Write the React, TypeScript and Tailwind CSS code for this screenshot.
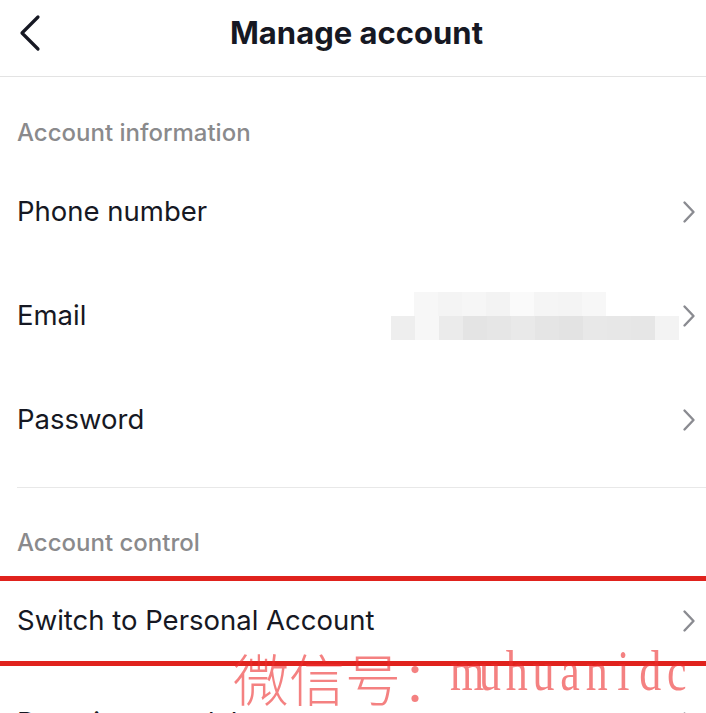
import React from "react";

const font = { fontFamily: "Inter, 'Open Sans', sans-serif" };

function Chevron({ className = "" }: { className?: string }) {
  return (
    <svg width="14" height="24" viewBox="0 0 14 24" className={className} fill="none">
      <path d="M2.5 2.5 L11.5 12 L2.5 21.5" stroke="#8a8b91" strokeWidth="2.4" strokeLinecap="round" strokeLinejoin="round" />
    </svg>
  );
}

function Row({ label, children, className = "" }: { label: string; children?: React.ReactNode; className?: string }) {
  return (
    <div className={`flex h-[104px] items-center justify-between pl-[17px] pr-[10px] ${className}`}>
      <span className="text-[27.5px] text-[#161823]">{label}</span>
      <div className="flex items-center">
        {children}
        <Chevron />
      </div>
    </div>
  );
}

function SectionLabel({ label, h, pt }: { label: string; h: string; pt: string }) {
  return (
    <div className={`${h} ${pt} pl-[17px]`}>
      <span className="text-[24px] font-medium leading-[28px] text-[#8a8a8c]">{label}</span>
    </div>
  );
}

// pixelated blur over the email address
const blurTop = ["#f7f7f7", "#f4f4f4", "#f6f6f6", "#f3f3f3", "#fafafa", "#f5f5f5", "#f4f4f4", "#f7f7f7"];
const blurBottom = ["#eeeeee", "#f7f7f7", "#ebebeb", "#e4e4e4", "#e6e6e6", "#e9e9e9", "#e5e5e5", "#e3e3e3", "#e8e8e8", "#e7e7e7", "#e6e6e6", "#f3f3f3"];

function EmailBlur() {
  return (
    <div className="mr-[3px] flex flex-col">
      <div className="ml-[23px] flex h-[24px]">
        {blurTop.map((c, i) => (
          <div key={i} className="h-full w-[24px]" style={{ backgroundColor: c }} />
        ))}
      </div>
      <div className="flex h-[24px]">
        {blurBottom.map((c, i) => (
          <div key={i} className="h-full w-[24px]" style={{ backgroundColor: c }} />
        ))}
      </div>
    </div>
  );
}

export default function App() {
  return (
    <div className="relative h-[713px] w-[706px] overflow-hidden bg-white" style={font}>
      {/* Header */}
      <div className="relative flex h-[77px] items-center justify-center border-b border-[#e3e3e3]">
        <svg width="24" height="38" viewBox="0 0 24 38" className="absolute left-[18px] top-[14px]" fill="none">
          <path d="M20 3 L4 19 L20 35" stroke="#161823" strokeWidth="3.2" strokeLinecap="round" strokeLinejoin="round" />
        </svg>
        <h1 className="mb-[10px] ml-[7px] text-[31px] font-bold text-[#161823]">Manage account</h1>
      </div>

      <SectionLabel label="Account information" h="h-[83px]" pt="pt-[42px]" />
      <Row label="Phone number" />
      <Row label="Email">
        <EmailBlur />
      </Row>
      <Row label="Password" />

      <div className="ml-[17px] mt-[15px] h-px bg-[#e8e8e8]" />

      <SectionLabel label="Account control" h="h-[88px]" pt="pt-[41px]" />
      <div className="border-y-[5px] border-[#e0221d]">
        <div className="flex h-[80px] items-center justify-between pl-[17px] pr-[10px]">
          <span className="text-[27.5px] text-[#161823]">Switch to Personal Account</span>
          <Chevron />
        </div>
      </div>
      <Row label="Deactivate or delete account" className="pt-[10px]" />

      {/* watermark */}
      <div className="pointer-events-none absolute left-[233px] top-[645px] flex items-end whitespace-nowrap text-[rgba(236,45,45,0.6)]">
        <span className="text-[56px] leading-[64px]" style={{ fontFamily: "'Noto Sans CJK SC', sans-serif", fontWeight: 300 }}>
          微信号：
        </span>
        <span className="mb-[1px] -ml-[7px] flex h-[56px] origin-bottom scale-y-[1.3]" style={{ fontFamily: "'Liberation Serif', serif" }}>
          {"muhuanidc".split("").map((ch, i) => (
            <span key={i} className="w-[26.7px] text-center text-[44px] leading-[56px]">
              {ch}
            </span>
          ))}
        </span>
      </div>
    </div>
  );
}
